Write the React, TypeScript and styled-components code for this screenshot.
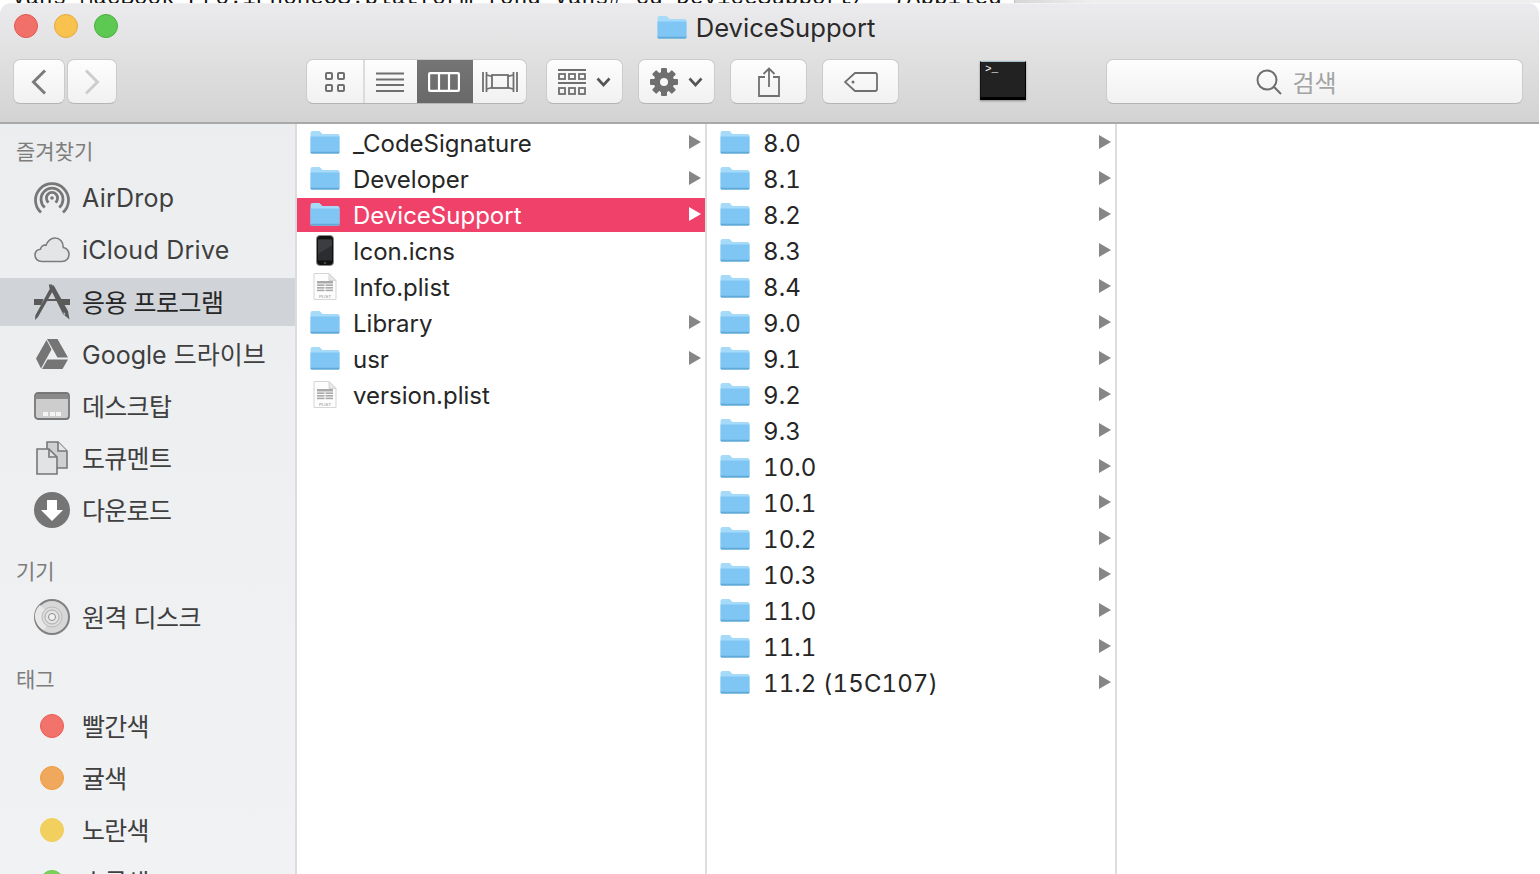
import React from "react";
import styled, { createGlobalStyle } from "styled-components";

const Global = createGlobalStyle`
  html, body { margin: 0; padding: 0; background: #fff; }
  body { overflow: hidden; font-family: Inter, "Noto Sans CJK KR", sans-serif; }
  #root { height: 874px; }
`;

const Page = styled.div`
  width: 1540px; height: 874px; overflow: hidden; display: flex; flex-direction: column; background: #fff;
`;
const BehindTerminal = styled.div`
  height: 3px; flex: none; overflow: hidden; display: flex; background: #fff;
`;
const BehindText = styled.div`
  width: 1008px; flex: none; padding-left: 12px; box-sizing: border-box; margin-top: -12px; height: 20px;
  font: 22.6px/20px "Liberation Mono", monospace; color: #111; white-space: pre;
`;
const BehindScroll = styled.div`
  flex: 1; margin-left: 6px; background: linear-gradient(90deg, #d6d6d6, #efefef 15%, #efefef); border-left: 1px solid #bbb;
`;
const Window = styled.div`
  flex: 1; min-height: 0; display: flex; flex-direction: column; overflow: hidden;
  border-radius: 11px 11px 0 0; margin-right: 1px; background: #fff;
`;
const TitleBar = styled.header`
  flex: none; height: 121px; box-sizing: border-box; border-top: 1px solid #f1f1f2; border-bottom: 2px solid #a9a9a9;
  background: linear-gradient(#ebebed, #d3d3d3); position: relative; padding-top: 9px;
`;
const Lights = styled.div`
  position: absolute; left: 14px; top: 10px; display: flex; gap: 16px;
`;
const Light = styled.span<{ $c: string; $b: string }>`
  width: 24px; height: 24px; box-sizing: border-box; border-radius: 50%; background: ${p => p.$c}; border: 1px solid ${p => p.$b};
`;
const TitleRow = styled.div`
  height: 28px; display: flex; align-items: center; justify-content: center; gap: 9px; padding-right: 7px;
  font-size: 25.6px; color: #2a2a2a;
`;
const Toolbar = styled.div`
  display: flex; height: 44px; margin-top: 18px; padding-left: 13px;
`;
const Nav = styled.div`
  display: flex; gap: 2px; margin-right: 189px;
`;
const Btn = styled.button<{ $w: number; $ml?: number }>`
  width: ${p => p.$w}px; height: 45px; margin: 0 0 0 ${p => p.$ml ?? 0}px; padding: 0; flex: none;
  display: flex; align-items: center; justify-content: center; gap: 10px; box-sizing: border-box;
  border: 1px solid #cbcbcb; border-bottom-color: #b5b5b5; border-radius: 7px;
  background: linear-gradient(#fdfdfd, #f1f1f1);
`;
const Seg = styled.div`
  display: flex; width: 221px; height: 45px; flex: none; box-sizing: border-box; overflow: hidden;
  border: 1px solid #cbcbcb; border-bottom-color: #b5b5b5; border-radius: 7px;
  background: linear-gradient(#fdfdfd, #f1f1f1);
`;
const SegCell = styled.div<{ $w: number; $on?: boolean; $div?: boolean; $pr?: number }>`
  width: ${p => p.$w}px; flex: none; display: flex; align-items: center; justify-content: center; box-sizing: border-box;
  padding-right: ${p => p.$pr ?? 0}px;
  background: ${p => (p.$on ? "linear-gradient(#757575, #696969)" : "transparent")};
  border-right: ${p => (p.$div ? "2px solid #dcdcdc" : "0")};
`;
const TerminalThumb = styled.div`
  width: 46px; height: 39px; margin: 2px 0 0 81px; flex: none; box-sizing: border-box; background: #222;
  border: 1px solid #111; border-top-color: #9fc0c8; border-right-color: #000; border-bottom: 3px solid #000;
  box-shadow: 0 1px 2px rgba(0,0,0,.35);
  color: #fff; font: 11px/12px "Liberation Mono", monospace; padding: 1px 0 0 4px;
`;
const Search = styled.div`
  width: 417px; height: 45px; margin-left: 80px; flex: none; box-sizing: border-box; display: flex; align-items: center; justify-content: center; gap: 10px;
  border: 1px solid #cbcbcb; border-bottom-color: #b5b5b5; border-radius: 7px;
  background: linear-gradient(#fdfdfd, #f1f1f1); color: #a3a3a3; font-size: 24px; padding-right: 36px;
`;
const Main = styled.div`
  flex: 1; min-height: 0; display: flex; overflow: hidden;
`;
const Sidebar = styled.aside`
  width: 297px; flex: none; box-sizing: border-box; border-right: 2px solid #dcdcdc; padding-top: 14px;
  background: linear-gradient(#ecedef, #f0f2f4); overflow: hidden; display: flex; flex-direction: column;
`;
const SectionHead = styled.div<{ $mt?: number; $mb?: number }>`
  height: 28px; flex: none; line-height: 28px; margin: ${p => p.$mt ?? 0}px 0 ${p => p.$mb ?? 6}px 16px; font-size: 21px; color: #7d7d7d;
`;
const SideRow = styled.div<{ $on?: boolean; $ls?: number }>`
  height: 48px; flex: none; margin: 2px 0; width: 295px; display: flex; align-items: center; gap: 12px; padding-left: 34px; box-sizing: border-box;
  font-size: 25px; letter-spacing: ${p => p.$ls ?? 0}px; color: ${p => (p.$on ? "#262626" : "#3f3f3f")}; background: ${p => (p.$on ? "#d0d3d7" : "transparent")};
  white-space: nowrap;
`;
const SideLabel = styled.span<{ $raise?: boolean }>`
  margin-bottom: ${p => (p.$raise ? 2 : 0)}px;
`;
const IconBox = styled.span`
  width: 36px; height: 36px; flex: none; display: flex; align-items: center; justify-content: center;
`;
const Dot = styled.span<{ $c: string; $b: string }>`
  width: 24px; height: 24px; box-sizing: border-box; border-radius: 50%; background: ${p => p.$c}; border: 1px solid ${p => p.$b};
`;
const Column = styled.section<{ $w?: number }>`
  ${p => (p.$w ? `width: ${p.$w}px; flex: none; border-right: 2px solid #dedede;` : "flex: 1;")}
  box-sizing: border-box; padding-top: 2px; background: #fff; display: flex; flex-direction: column; gap: 2px;
`;
const Row = styled.div<{ $on?: boolean }>`
  height: 34px; flex: none; display: flex; align-items: center; padding: 0 4px 0 13px; box-sizing: border-box;
  font-size: 24px; color: ${p => (p.$on ? "#fff" : "#262626")}; background: ${p => (p.$on ? "#ef416a" : "transparent")};
`;
const RowIcon = styled.span`
  width: 30px; height: 26px; flex: none; display: flex; align-items: center; justify-content: center; margin-right: 13px; margin-top: -2px;
`;
const RowText = styled.span<{ $num?: boolean }>`
  flex: 1; white-space: nowrap;
  ${p => (p.$num ? "font-variant-numeric: tabular-nums; letter-spacing: 0.1px;" : "")}
`;
const Chevron = styled.svg`
  width: 12px; height: 14px; flex: none; margin-top: -3px;
`;

const Folder = ({ w = 30, h = 24 }: { w?: number; h?: number }) => (
  <svg width={w} height={h} viewBox="0 0 30 24">
    <path d="M0.5 3a2 2 0 0 1 2-2h7l3 3h15a2 2 0 0 1 2 2v16a1.5 1.5 0 0 1-1.5 1.5h-26A1.5 1.5 0 0 1 .5 22z" fill="#a6daf9" />
    <path d="M0.5 6.5h29V22a1.5 1.5 0 0 1-1.5 1.5H2A1.5 1.5 0 0 1 .5 22z" fill="#80c6f5" />
    <path d="M.5 21.8V22A1.5 1.5 0 0 0 2 23.5h26a1.5 1.5 0 0 0 1.5-1.5v-.2z" fill="#63a9d6" />
  </svg>
);
const Plist = () => (
  <svg width="24" height="27" viewBox="0 0 24 27">
    <path d="M1 .5h15l7 7v19H1z" fill="#fdfdfd" stroke="#d5d5d5" />
    <path d="M16 .5v7h7z" fill="#e6e6e6" stroke="#d5d5d5" />
    <g fill="#a9a9a9">
      <rect x="4" y="8" width="16" height="2.500" /><rect x="4" y="11.400" width="7.500" height="1.600" /><rect x="12.500" y="11.400" width="7.500" height="1.600" />
      <rect x="4" y="14" width="7.500" height="1.600" /><rect x="12.500" y="14" width="7.500" height="1.600" /><rect x="4" y="16.600" width="7.500" height="1.600" /><rect x="12.500" y="16.600" width="7.500" height="1.600" />
    </g>
    <text x="12" y="24.600" textAnchor="middle" fontSize="4.400" fill="#888" fontFamily="Liberation Sans">PLIST</text>
  </svg>
);
const Phone = () => (
  <svg width="18" height="31" viewBox="0 0 18 31">
    <rect x=".5" y=".5" width="17" height="30" rx="3.5" fill="#111" stroke="#8a8a8a" />
    <rect x="2" y="4.5" width="14" height="21" fill="#2b2d30" />
    <path d="M2 4.5h14v6L2 19z" fill="#3b3d40" />
    <circle cx="9" cy="28" r="1.3" fill="#444" />
  </svg>
);
const RowChevron = ({ on }: { on?: boolean }) => (
  <Chevron viewBox="0 0 12 14"><path d="M0 0L12 7L0 14z" fill={on ? "#fff" : "#868686"} /></Chevron>
);

const c = "#777";
const AirDrop = () => (
  <svg width="36" height="34" viewBox="0 0 36 34" fill="none" stroke={c} strokeWidth="2.800">
    <path d="M7 31.5A16.5 16.5 0 1 1 29 31.5" />
    <path d="M10.8 26.5A11 11 0 1 1 25.2 26.5" />
    <path d="M14.6 21.5A5.6 5.6 0 1 1 21.4 21.5" />
    <circle cx="18" cy="17" r="1.8" fill={c} stroke="none" />
  </svg>
);
const Cloud = () => (
  <svg width="36" height="26" viewBox="0 0 36 26">
    <path d="M8 24.5C3.5 24.5 1 21.5 1 18.3c0-3.2 2.2-5.6 5.4-6C7 9 9.400 7.600 12 8.300 14 3.500 17.500 1 21 1c5 0 8.400 4 8.300 9.500 3.400.8 5.700 3.500 5.700 7 0 4-3 7-7 7z" fill="#e4e5e7" stroke="#7c7c7c" strokeWidth="1.6" />
  </svg>
);
const AppsIcon = () => (
  <svg width="36" height="36" viewBox="0 0 36 36">
    <g fill="#5a5a5a">
      <path d="M0 15h9.500l-2.300 6H0z" />
      <path d="M26.500 15H36v6h-7.200z" />
      <path d="M13 15h10l.8 2H12.200z" />
      <path d="M14.800 0.500h3.400l1.700 4.500L4 33 1 36l.300-4.500L15.700 5z" />
      <path d="M16.800 5.500L19.500 1 34 27l1.500 8.500L29 30z" />
    </g>
    <path d="M29.500 28l2 2-1.500 1z" fill="#d0d3d7" />
  </svg>
);
const Drive = () => (
  <svg width="32" height="30" viewBox="0 0 32 30" fill="#757575">
    <path d="M11 0h10.500L32 18.500H21.500z" />
    <path d="M0 19.500L10.500 1l5 9.500L5 29.500z" />
    <path d="M11.500 20.500H32L26.500 30H6z" />
  </svg>
);
const Desktop = () => (
  <svg width="36" height="28" viewBox="0 0 36 28">
    <rect x="1" y="1" width="34" height="26" rx="3" fill="#cdcdcd" stroke="#777" strokeWidth="1.8" />
    <rect x="2" y="2" width="32" height="5" fill="#8a8a8a" />
    <g fill="#f4f4f4"><rect x="9" y="20" width="5" height="4" /><rect x="16" y="20" width="5" height="4" /><rect x="22" y="20" width="5" height="4" /></g>
  </svg>
);
const Docs = () => (
  <svg width="32" height="34" viewBox="0 0 32 34" stroke="#777" strokeWidth="1.6">
    <path d="M11 1h11l9 9v17H11z" fill="#cfd0d2" />
    <path d="M22 1v9h9" fill="#e6e7e9" />
    <path d="M1 8h12l8 8v17H1z" fill="#e2e3e5" />
    <path d="M13 8v8h8" fill="none" />
  </svg>
);
const Download = () => (
  <svg width="36" height="36" viewBox="0 0 36 36">
    <circle cx="18" cy="18" r="18" fill="#757575" />
    <path d="M13 8h10v10h6L18 29 7 18h6z" fill="#fff" />
  </svg>
);
const Disk = () => (
  <svg width="36" height="36" viewBox="0 0 36 36">
    <circle cx="18" cy="18" r="17" fill="#d7d7d7" stroke="#808080" strokeWidth="2" />
    <path d="M6 6L18 18 10 31A15 15 0 0 1 6 6z" fill="#e8e8e8" />
    <circle cx="18" cy="18" r="10" fill="#dcdcdc" stroke="#bbb" />
    <circle cx="18" cy="18" r="7" fill="#e4e4e4" stroke="#aaa" />
    <circle cx="18" cy="18" r="3.500" fill="#f1f1f1" stroke="#8c8c8c" />
  </svg>
);

const g = "#6f6f6f";
const BackIcon = ({ color }: { color: string }) => (
  <svg width="16" height="26" viewBox="0 0 16 26" fill="none" stroke={color} strokeWidth="3"><path d="M14 1.500L2.500 13 14 24.500" /></svg>
);
const ForwardIcon = ({ color }: { color: string }) => (
  <svg width="16" height="26" viewBox="0 0 16 26" fill="none" stroke={color} strokeWidth="3"><path d="M2 1.500L13.500 13 2 24.500" /></svg>
);
const GridIcon = () => (
  <svg width="20" height="20" viewBox="0 0 20 20" fill="none" stroke={g} strokeWidth="2">
    <rect x="1" y="1" width="6" height="6" rx="1" /><rect x="13" y="1" width="6" height="6" rx="1" />
    <rect x="1" y="13" width="6" height="6" rx="1" /><rect x="13" y="13" width="6" height="6" rx="1" />
  </svg>
);
const ListIcon = () => (
  <svg width="28" height="20" viewBox="0 0 28 20" stroke={g} strokeWidth="2"><path d="M0 1.500h28M0 7.500h28M0 13h28M0 19h28" /></svg>
);
const ColumnsIcon = () => (
  <svg width="32" height="20" viewBox="0 0 32 20" fill="none" stroke="#fff" strokeWidth="2.200"><rect x="1.100" y="1.100" width="29.800" height="17.800" rx="1" /><path d="M11 1v18M21 1v18" /></svg>
);
const CoverIcon = () => (
  <svg width="36" height="20" viewBox="0 0 36 20" fill="none" stroke={g} strokeWidth="1.800">
    <path d="M1 0v20M4.500 0v20M35 0v20M31.500 0v20" />
    <rect x="10" y="3" width="16" height="13" />
    <path d="M5 3l5 1.500M5 17l5-1.500M31 3l-5 1.500M31 17l-5-1.500" />
  </svg>
);
const GroupIcon = () => (
  <svg width="28" height="26" viewBox="0 0 28 26" fill="none" stroke={g} strokeWidth="1.800">
    <path d="M0 1h28M0 14h28" />
    <rect x="1" y="5" width="6" height="5" /><rect x="11" y="5" width="6" height="5" /><rect x="21" y="5" width="6" height="5" />
    <rect x="1" y="19" width="6" height="6" /><rect x="11" y="19" width="6" height="6" /><rect x="21" y="19" width="6" height="6" />
  </svg>
);
const Caret = () => (
  <svg width="15" height="10" viewBox="0 0 15 10" fill="none" stroke="#555" strokeWidth="2.600"><path d="M1.500 1.500L7.500 8l6-6.500" /></svg>
);
const GearIcon = () => (
  <svg width="28" height="28" viewBox="0 0 28 28">
    <g fill={g}>
      {[0, 45, 90, 135].map(a => <rect key={a} x="11" y="0" width="6" height="28" rx="1" transform={`rotate(${a} 14 14)`} />)}
    </g>
    <circle cx="14" cy="14" r="4" fill="#f7f7f7" />
    <circle cx="14" cy="14" r="7.500" fill="none" stroke={g} strokeWidth="5.500" />
  </svg>
);
const ShareIcon = () => (
  <svg width="22" height="30" viewBox="0 0 22 30" fill="none" stroke={g} strokeWidth="1.800">
    <path d="M7 10H1v19h20V10h-6" />
    <path d="M11 20V1.500M5.500 7L11 1.500 16.500 7" />
  </svg>
);
const TagIcon = () => (
  <svg width="34" height="20" viewBox="0 0 34 20" fill="none" stroke={g} strokeWidth="1.800">
    <path d="M11 1h20a2 2 0 0 1 2 2v14a2 2 0 0 1-2 2H11L1 10z" />
    <circle cx="9" cy="10" r="1.500" fill={g} stroke="none" />
  </svg>
);
const SearchIcon = () => (
  <svg width="26" height="26" viewBox="0 0 26 26" fill="none" stroke="#6e6e6e" strokeWidth="2"><circle cx="11" cy="11" r="9.500" /><path d="M17.800 17.800L25 25" /></svg>
);

const favourites: [string, React.ReactNode, number, boolean][] = [
  ["AirDrop", <AirDrop />, 0.25, false],
  ["iCloud Drive", <Cloud />, 0.25, false],
  ["응용 프로그램", <AppsIcon />, -0.5, true],
  ["Google 드라이브", <Drive />, 0, true],
  ["데스크탑", <Desktop />, -0.7, true],
  ["도큐멘트", <Docs />, -0.7, true],
  ["다운로드", <Download />, -0.7, true],
];
const tags: [string, string, string][] = [
  ["빨간색", "#f2736b", "#ec5a50"],
  ["귤색", "#f0a95c", "#f29c3c"],
  ["노란색", "#f2d060", "#f2cf58"],
  ["초록색", "#7cd05c", "#6fc94e"],
];
const rootEntries: { name: string; kind: "folder" | "plist" | "phone" }[] = [
  { name: "_CodeSignature", kind: "folder" },
  { name: "Developer", kind: "folder" },
  { name: "DeviceSupport", kind: "folder" },
  { name: "Icon.icns", kind: "phone" },
  { name: "Info.plist", kind: "plist" },
  { name: "Library", kind: "folder" },
  { name: "usr", kind: "folder" },
  { name: "version.plist", kind: "plist" },
];
const versions = ["8.0", "8.1", "8.2", "8.3", "8.4", "9.0", "9.1", "9.2", "9.3", "10.0", "10.1", "10.2", "10.3", "11.0", "11.1", "11.2 (15C107)"];

export default function App() {
  return (
    <Page>
      <Global />
      <BehindTerminal>
        <BehindText>Vans-MacBook-Pro:iPhoneOS.platform fond-Vans# cd DeviceSupport/  7Abbiled</BehindText>
        <BehindScroll />
      </BehindTerminal>
      <Window>
        <TitleBar>
          <Lights>
            <Light $c="#f2706a" $b="#e2574f" />
            <Light $c="#f8c24f" $b="#e3a93c" />
            <Light $c="#5ec952" $b="#4cae43" />
          </Lights>
          <TitleRow><Folder />DeviceSupport</TitleRow>
          <Toolbar>
            <Nav>
              <Btn $w={52}><BackIcon color="#7b7b7b" /></Btn>
              <Btn $w={50}><ForwardIcon color="#cdcdcd" /></Btn>
            </Nav>
            <Seg>
              <SegCell $w={58} $div $pr={1}><GridIcon /></SegCell>
              <SegCell $w={52} $pr={2}><ListIcon /></SegCell>
              <SegCell $w={56} $on $pr={2}><ColumnsIcon /></SegCell>
              <SegCell $w={53}><CoverIcon /></SegCell>
            </Seg>
            <Btn $w={77} $ml={19}><GroupIcon /><Caret /></Btn>
            <Btn $w={77} $ml={15}><GearIcon /><Caret /></Btn>
            <Btn $w={77} $ml={15}><ShareIcon /></Btn>
            <Btn $w={77} $ml={15}><TagIcon /></Btn>
            <TerminalThumb>&gt;_</TerminalThumb>
            <Search><SearchIcon />검색</Search>
          </Toolbar>
        </TitleBar>
        <Main>
          <Sidebar>
            <SectionHead>즐겨찾기</SectionHead>
            {favourites.map(([label, icon, ls, raise], i) => (
              <SideRow key={label} $on={i === 2} $ls={ls}><IconBox>{icon}</IconBox><SideLabel $raise={raise}>{label}</SideLabel></SideRow>
            ))}
            <SectionHead $mt={22} $mb={5}>기기</SectionHead>
            <SideRow $ls={-0.5}><IconBox><Disk /></IconBox><SideLabel $raise>원격 디스크</SideLabel></SideRow>
            <SectionHead $mt={23}>태그</SectionHead>
            {tags.map(([label, col, border]) => (
              <SideRow key={label} $ls={-0.7}><IconBox><Dot $c={col} $b={border} /></IconBox><SideLabel $raise>{label}</SideLabel></SideRow>
            ))}
          </Sidebar>
          <Column $w={410}>
            {rootEntries.map((e, i) => (
              <Row key={e.name} $on={i === 2}>
                <RowIcon>{e.kind === "folder" ? <Folder /> : e.kind === "plist" ? <Plist /> : <Phone />}</RowIcon>
                <RowText>{e.name}</RowText>
                {e.kind === "folder" && <RowChevron on={i === 2} />}
              </Row>
            ))}
          </Column>
          <Column $w={410}>
            {versions.map(v => (
              <Row key={v}>
                <RowIcon><Folder /></RowIcon>
                <RowText $num>{v}</RowText>
                <RowChevron />
              </Row>
            ))}
          </Column>
          <Column />
        </Main>
      </Window>
    </Page>
  );
}
